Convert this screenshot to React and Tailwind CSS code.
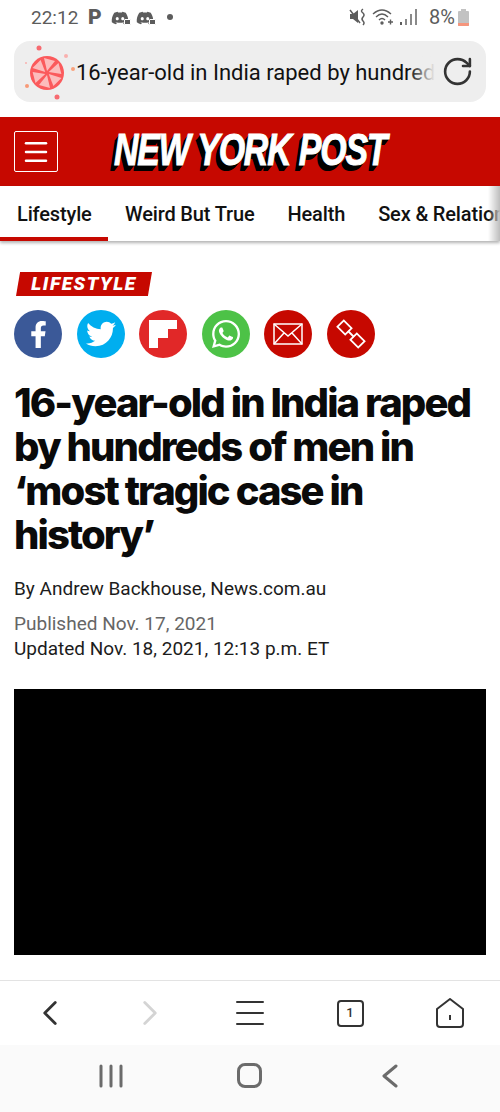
import { RotateCw, Menu, ChevronLeft, ChevronRight } from "lucide-react";
import { FaFacebookF, FaTwitter, FaWhatsapp, FaDiscord } from "react-icons/fa";

function GameIcon({ className }) {
  return (
    <div className={`relative w-[20px] h-[16px] ${className}`}>
      <FaDiscord size={18} className="text-[#5c5c5c]" />
      <span className="absolute right-0 bottom-0 w-[7px] h-[6px] bg-[#5c5c5c] border border-white rounded-[1px]" />
    </div>
  );
}

function StatusBar() {
  return (
    <div className="h-[41px] pl-[31px] pr-[31px] pb-[7px] flex items-center justify-between text-[#5c5c5c] font-['Roboto',sans-serif]">
      <div className="flex items-center">
        <span className="text-[19px] leading-none w-[50px]">22:12</span>
        <span className="ml-[7px] text-[21px] font-black leading-none w-[17px]">P</span>
        <GameIcon className="ml-[6px]" />
        <GameIcon className="ml-[5px]" />
        <span className="ml-[11px] w-[6px] h-[6px] rounded-full bg-[#5c5c5c]" />
      </div>
      <div className="flex items-center">
        <svg width="18" height="18" viewBox="0 0 18 18" fill="none">
          <path d="M1 6 H4 L9 2 V15 L4 11 H1 Z" fill="#5c5c5c" />
          <path d="M1 2 L11 15" stroke="#5c5c5c" strokeWidth="1.5" />
          <path d="M14 1 Q11 3 14 5 Q16 7 14 9 Q12 11 14 13 Q16 15 14 17" stroke="#5c5c5c" strokeWidth="1.5" />
        </svg>
        <svg width="22" height="18" viewBox="0 0 22 18" fill="none" stroke="#5c5c5c" strokeWidth="1.4" className="ml-[5px]">
          <path d="M1 6 Q10 -2 19 6" />
          <path d="M4 9 Q10 3 16 9" />
          <path d="M7 12 Q10 9 13 12" />
          <circle cx="10" cy="15" r="1" fill="#5c5c5c" />
          <path d="M16 14 H21 M18.500 11.500 V16.500" />
        </svg>
        <div className="ml-[6px] flex items-end gap-[3px] h-[16px]">
          <span className="w-[2px] h-[3px] bg-[#5c5c5c]" />
          <span className="w-[2px] h-[6px] bg-[#8a8a8a]" />
          <span className="w-[2px] h-[11px] bg-[#8a8a8a]" />
          <span className="w-[2px] h-[16px] bg-[#8a8a8a]" />
        </div>
        <span className="ml-[12px] text-[20px] leading-none">8%</span>
        <div className="ml-[3px] w-[11px] h-[17px] flex flex-col items-center">
          <span className="w-[5px] h-[2px] bg-[#c2c2c2]" />
          <span className="w-[11px] h-[15px] bg-[#c2c2c2] rounded-t-[1px] flex flex-col justify-end">
            <span className="h-[3px] bg-[#f5957c] rounded-b-[1px]" />
          </span>
        </div>
      </div>
    </div>
  );
}

function SiteIcon() {
  return (
    <div className="relative w-[50px] h-[50px] shrink-0">
      <svg width="64" height="62" viewBox="0 0 64 62" className="absolute left-0 -top-[5px]">
        <circle cx="33" cy="31" r="17" fill="#fb5a5c" />
        {[0, 60, 120, 180, 240, 300].map((deg) => (
          <path key={deg} d="M33 29 L30 16 L41 19 Z" fill="#fdd5d5" opacity="0.8" transform={`rotate(${deg} 33 31)`} />
        ))}
        <circle cx="25" cy="6" r="2.500" fill="#f76a70" />
        <circle cx="52" cy="14" r="2" fill="#f9b0ae" />
        <circle cx="12" cy="21" r="1" fill="#f9b0ae" />
        <circle cx="13" cy="44" r="2" fill="#f79a78" />
        <circle cx="59" cy="27" r="2" fill="#f9a27c" />
        <circle cx="43" cy="55" r="2.500" fill="#f76a70" />
      </svg>
    </div>
  );
}

function UrlBar() {
  return (
    <div className="mx-[14px] h-[61px] rounded-[16px] bg-[#eeeeee] flex items-center pr-[12px] font-['Roboto',sans-serif]">
      <SiteIcon />
      <div className="relative flex-1 overflow-hidden whitespace-nowrap text-[22px] text-[#111111] leading-[28px] pl-[12px] pt-[3px]">
        16-year-old in India raped by hundreds
        <span className="absolute right-0 top-0 bottom-0 w-[26px] bg-gradient-to-r from-transparent to-[#eeeeee]" />
      </div>
      <RotateCw size={33} strokeWidth={1.9} className="ml-[6px] text-[#333333]" />
    </div>
  );
}

function Masthead() {
  return (
    <div className="mt-[15px] h-[69px] bg-[#c60800] flex items-center pl-[14px]">
      <div className="w-[44px] h-[41px] border border-white rounded-[2px] flex items-center justify-center">
        <Menu size={30} strokeWidth={2} className="text-white" />
      </div>
      <span className="ml-[56px] -mt-[4px] origin-left scale-x-[0.77] whitespace-nowrap text-white italic font-bold text-[44px] tracking-[-1.5px] leading-none font-['Liberation_Sans',sans-serif] [-webkit-text-stroke:1px_white] [text-shadow:-1px_1px_0_#000,-2px_2px_0_#000,-3px_3px_0_#000,-4px_4px_0_#000,-5px_5px_0_#000,-6px_6px_0_#000]">
        NEW YORK POST
      </span>
    </div>
  );
}

function SectionNav() {
  return (
    <div className="relative h-[55px] bg-white flex items-start overflow-hidden whitespace-nowrap font-['Roboto',sans-serif] font-medium text-[20px] tracking-[-0.15px] text-[#111111] shadow-[0_2px_3px_rgba(0,0,0,0.3)]">
      <div className="w-[108px] h-full border-b-4 border-[#c60800] pl-[17px] pt-[15px] leading-[26px] shrink-0">Lifestyle</div>
      <div className="ml-[17px] pt-[15px] leading-[26px] shrink-0">Weird But True</div>
      <div className="ml-[33px] pt-[15px] leading-[26px] shrink-0">Health</div>
      <div className="ml-[33px] pt-[15px] leading-[26px] shrink-0">Sex &amp; Relation</div>
      <span className="absolute right-0 top-0 bottom-0 w-[12px] bg-gradient-to-r from-transparent to-[#bdbdbd]" />
    </div>
  );
}

function SocialRow() {
  const circle = "w-[48px] h-[48px] rounded-full flex items-center justify-center text-white";
  return (
    <div className="mt-[14px] flex gap-[14.500px]">
      <div className={`${circle} bg-[#3b5998]`}><FaFacebookF size={27} /></div>
      <div className={`${circle} bg-[#00aeef]`}><FaTwitter size={30} /></div>
      <div className={`${circle} bg-[#e12828]`}>
        <svg width="28" height="28" viewBox="0 0 28 28" fill="white">
          <path d="M0 0 H28 V9 H19 V18 H9 V28 H0 Z" />
        </svg>
      </div>
      <div className={`${circle} bg-[#4dc247]`}><FaWhatsapp size={32} /></div>
      <div className={`${circle} bg-[#c60800]`}>
        <svg width="30" height="24" viewBox="0 0 30 24" fill="none" stroke="white" strokeWidth="1.500">
          <rect x="1" y="2" width="28" height="20" />
          <path d="M1 2 L15 14 L29 2 M1 22 L11 11 M29 22 L19 11" />
        </svg>
      </div>
      <div className={`${circle} bg-[#c60800]`}>
        <svg width="30" height="30" viewBox="0 0 30 30" fill="none" stroke="white" strokeWidth="1.800">
          <rect x="3" y="4" width="11" height="9" transform="rotate(45 8.500 8.500)" />
          <rect x="16" y="17" width="11" height="9" transform="rotate(45 21.500 21.500)" />
          <path d="M12 12 L18 18" />
        </svg>
      </div>
    </div>
  );
}

function BrowserBar() {
  return (
    <div className="mt-auto h-[65px] bg-white border-t border-[#e3e3e3] grid grid-cols-5 items-center text-[#333333]">
      <div className="flex justify-center"><ChevronLeft size={42} strokeWidth={1.600} /></div>
      <div className="flex justify-center text-[#d4d4d4]"><ChevronRight size={42} strokeWidth={1.600} /></div>
      <div className="flex justify-center">
        <svg width="28" height="26" viewBox="0 0 28 26" stroke="currentColor" strokeWidth="2" strokeLinecap="round">
          <path d="M1 2 H27 M1 13 H27 M1 24 H27" />
        </svg>
      </div>
      <div className="flex justify-center">
        <div className="w-[27px] h-[27px] border-2 border-[#333333] rounded-[4px] flex items-center justify-center text-[13px] font-medium font-['Roboto',sans-serif]">1</div>
      </div>
      <div className="flex justify-center">
        <svg width="28" height="30" viewBox="0 0 28 30" fill="none" stroke="currentColor" strokeWidth="2" strokeLinejoin="round">
          <path d="M1 11 L14 1 L27 11 V26 Q27 29 24 29 H4 Q1 29 1 26 Z" />
          <path d="M14 17 V22" />
        </svg>
      </div>
    </div>
  );
}

function SystemNav() {
  return (
    <div className="h-[67px] bg-[#fafafa] grid grid-cols-[1fr_1fr_1fr] items-center text-[#6b6b6b] pb-[6px]">
      <div className="flex justify-end pr-[44px]">
        <svg width="24" height="24" viewBox="0 0 24 24" stroke="currentColor" strokeWidth="3" strokeLinecap="round">
          <path d="M2 2 V22 M12 2 V22 M22 2 V22" />
        </svg>
      </div>
      <div className="flex justify-center">
        <div className="w-[25px] h-[25px] border-[3px] border-[#6b6b6b] rounded-[8px]" />
      </div>
      <div className="flex justify-start pl-[49px]">
        <svg width="16" height="24" viewBox="0 0 16 24" fill="none" stroke="currentColor" strokeWidth="3" strokeLinecap="round" strokeLinejoin="round">
          <path d="M14 2 L2 12 L14 22" />
        </svg>
      </div>
    </div>
  );
}

export default function App() {
  return (
    <div className="w-[500px] h-[1112px] bg-white flex flex-col overflow-hidden">
      <StatusBar />
      <UrlBar />
      <Masthead />
      <SectionNav />
      <div className="px-[14px] pt-[31px]">
        <div className="ml-[2px] w-[136px] h-[24px] bg-[#c60800] [clip-path:polygon(3%_0,100%_0,97%_100%,0_100%)] flex items-center justify-center text-white italic font-black text-[19px] tracking-[1.6px] font-['Roboto',sans-serif]">
          LIFESTYLE
        </div>
        <SocialRow />
        <h1 className="mt-[23px] text-[40px] leading-[44px] font-extrabold tracking-[-1.9px] text-[#0a0a0a] font-['Inter',sans-serif]">
          16-year-old in India raped by hundreds of men in ‘most tragic case in history’
        </h1>
        <p className="mt-[20px] text-[19px] leading-[24px] text-[#1c1c1c] font-['Roboto',sans-serif]">By Andrew Backhouse, News.com.au</p>
        <p className="mt-[10px] text-[19px] leading-[25px] text-[#666666] font-['Roboto',sans-serif]">Published Nov. 17, 2021</p>
        <p className="text-[19px] leading-[25px] text-[#1c1c1c] font-['Roboto',sans-serif]">Updated Nov. 18, 2021, 12:13 p.m. ET</p>
        <div className="mt-[28px] h-[266px] bg-black" />
      </div>
      <BrowserBar />
      <SystemNav />
    </div>
  );
}
